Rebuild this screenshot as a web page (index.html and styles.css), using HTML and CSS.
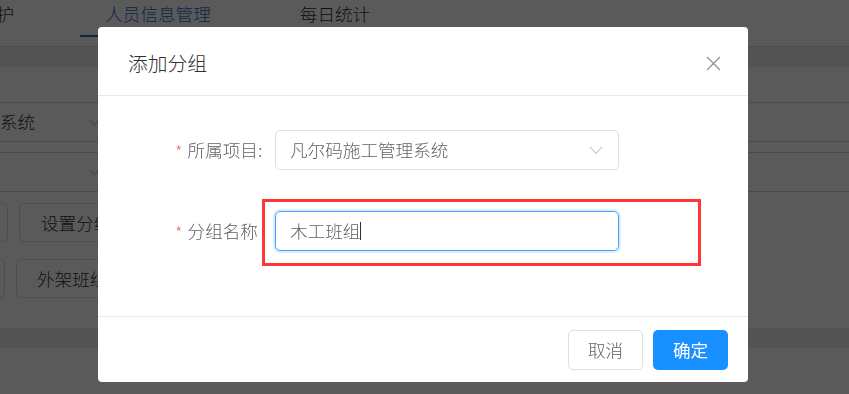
FILE: index.html
```html
<!DOCTYPE html>
<html lang="zh">
<head>
<meta charset="utf-8">
<title>添加分组</title>
<link rel="stylesheet" href="styles.css">
</head>
<body>
<div class="page">
  <div class="tabs">
    <div class="tab tab-first">维护</div>
    <div class="tab tab-active">人员信息管理</div>
    <div class="tab tab-third">每日统计</div>
  </div>
  <div class="band"></div>
  <div class="spacer lined"></div>
  <div class="bg-select lined"><span class="bg-select-text">系统</span><span class="bg-chev"></span></div>
  <div class="gap10 lined"></div>
  <div class="bg-select lined"><span class="bg-select-text"></span><span class="bg-chev"></span></div>
  <div class="gap10"></div>
  <div class="btn-row">
    <div class="bg-btn bg-btn-cut"></div>
    <div class="bg-btn bg-btn-a">设置分组</div>
  </div>
  <div class="gap17"></div>
  <div class="btn-row">
    <div class="bg-btn bg-btn-cut2"></div>
    <div class="bg-btn bg-btn-b">外架班组</div>
  </div>
  <div class="gap30"></div>
  <div class="band"></div>
</div>

<div class="overlay">
  <div class="dialog">
    <div class="dlg-header">
      <div class="dlg-title">添加分组</div>
      <svg class="dlg-close" width="15" height="15" viewBox="0 0 15 15"><path d="M1 1L14 14M14 1L1 14" stroke="#909399" stroke-width="1.3" fill="none"/></svg>
    </div>
    <div class="dlg-body">
      <div class="form-row">
        <div class="label"><span class="star">*</span>所属项目:</div>
        <div class="control select">
          <span class="control-text">凡尔码施工管理系统</span>
          <svg class="chev" width="14" height="9" viewBox="0 0 14 9"><path d="M1 1L7 7.5L13 1" stroke="#c0c4cc" stroke-width="1.1" fill="none"/></svg>
        </div>
      </div>
      <div class="form-row">
        <div class="label"><span class="star">*</span>分组名称</div>
        <div class="control focused">
          <span class="control-text">木工班组</span><span class="caret"></span>
        </div>
      </div>
    </div>
    <div class="dlg-footer">
      <div class="btn btn-default">取消</div>
      <div class="btn btn-primary">确定</div>
    </div>
    <div class="annot"></div>
  </div>
</div>
</body>
</html>
```

FILE: styles.css
```css
* { box-sizing: border-box; }
html, body { margin: 0; padding: 0; }
body {
  width: 849px;
  height: 394px;
  overflow: hidden;
  font-family: "Noto Sans CJK SC", "Microsoft YaHei", sans-serif;
  font-size: 17.6px;
  font-weight: 300;
  line-height: 24px;
  color: #303133;
  background: #fff;
}
.page { width: 849px; height: 394px; overflow: hidden; background: #fff; }

.tabs {
  height: 47px;
  border-bottom: 1px solid #d4d4d4;
  display: flex;
  align-items: flex-start;
  padding-top: 2px;
  position: relative;
}
.tab { white-space: nowrap; }
.tab-first { margin-left: -21px; }
.tab-active {
  margin-left: 91px;
  color: #2a6fc4;
  position: relative;
}
.tab-active::after {
  content: "";
  position: absolute;
  left: -25px;
  right: -25px;
  top: 33px;
  height: 2px;
  background: #2a6fc4;
}
.tab-third { margin-left: 89px; }

.band { height: 20px; background: #ececec; }
.lined { border-bottom: 1px solid #d4d4d4; }
.spacer { height: 36px; }
.bg-select {
  height: 39px;
  display: flex;
  align-items: center;
  width: 100%;
}
.bg-select-text { width: 90px; }
.bg-chev {
  width: 7px; height: 7px;
  border-right: 1px solid #c0c4cc;
  border-bottom: 1px solid #c0c4cc;
  transform: rotate(45deg);
  margin-top: -4px;
  margin-left: 1px;
}
.gap10 { height: 11px; }
.gap17 { height: 17px; }
.gap30 { height: 30px; }
.btn-row { height: 39px; display: flex; }
.bg-btn {
  height: 39px;
  border: 1px solid #dcdfe6;
  border-radius: 4px;
  display: flex;
  align-items: center;
  background: #fff;
  color: #303133;
}
.bg-btn-cut { width: 40px; margin-left: -32px; }
.bg-btn-a { width: 120px; margin-left: 11px; padding-left: 21px; }
.bg-btn-cut2 { width: 40px; margin-left: -35px; }
.bg-btn-b { width: 120px; margin-left: 11px; padding-left: 20px; }

.overlay {
  position: fixed;
  inset: 0;
  background: rgba(0, 0, 0, 0.647);
}
.dialog {
  position: relative;
  margin: 27px 0 0 98px;
  width: 650px;
  height: 355px;
  background: #fff;
  border-radius: 4px;
  display: flex;
  flex-direction: column;
}
.dlg-header {
  height: 69px;
  border-bottom: 1px solid #e8e8e8;
  display: flex;
  align-items: center;
  justify-content: space-between;
  padding: 4px 27px 0 30px;
}
.dlg-title { font-size: 19.8px; color: #303133; }
.dlg-close { display: block; }

.dlg-body {
  height: 221px;
  border-bottom: 1px solid #e8e8e8;
  padding: 34px 0 0 77px;
  display: flex;
  flex-direction: column;
  gap: 41px;
}
.form-row { display: flex; align-items: center; height: 40px; }
.label { width: 100px; color: #606266; white-space: nowrap; display: flex; align-items: center; }
.star { color: #f56c6c; margin-right: 5px; font-size: 17px; position: relative; top: 1px; }
.control {
  width: 344px;
  height: 40px;
  border: 1px solid #dcdfe6;
  border-radius: 5px;
  display: flex;
  align-items: center;
  padding: 0 14px;
  color: #606266;
}
.select { justify-content: space-between; padding-right: 15px; }
.chev { display: block; }
.focused {
  border-color: #409eff;
  box-shadow: 0 0 0 2px rgba(64, 158, 255, 0.18);
}
.caret {
  display: inline-block;
  width: 1px;
  height: 18px;
  background: #303133;
  margin-left: 0;
}

.dlg-footer {
  flex: 1;
  display: flex;
  justify-content: flex-end;
  align-items: flex-start;
  padding: 13px 20px 0 0;
  gap: 10px;
}
.btn {
  width: 75px;
  height: 40px;
  border-radius: 5px;
  display: flex;
  align-items: center;
  justify-content: center;
}
.btn-default { border: 1px solid #dcdfe6; color: #606266; background: #fff; }
.btn-primary { background: #1890ff; color: #fff; font-weight: 400; }

.annot {
  position: absolute;
  left: 164px;
  top: 172px;
  width: 439px;
  height: 67px;
  border: 3px solid #ff3636;
  pointer-events: none;
}
```
